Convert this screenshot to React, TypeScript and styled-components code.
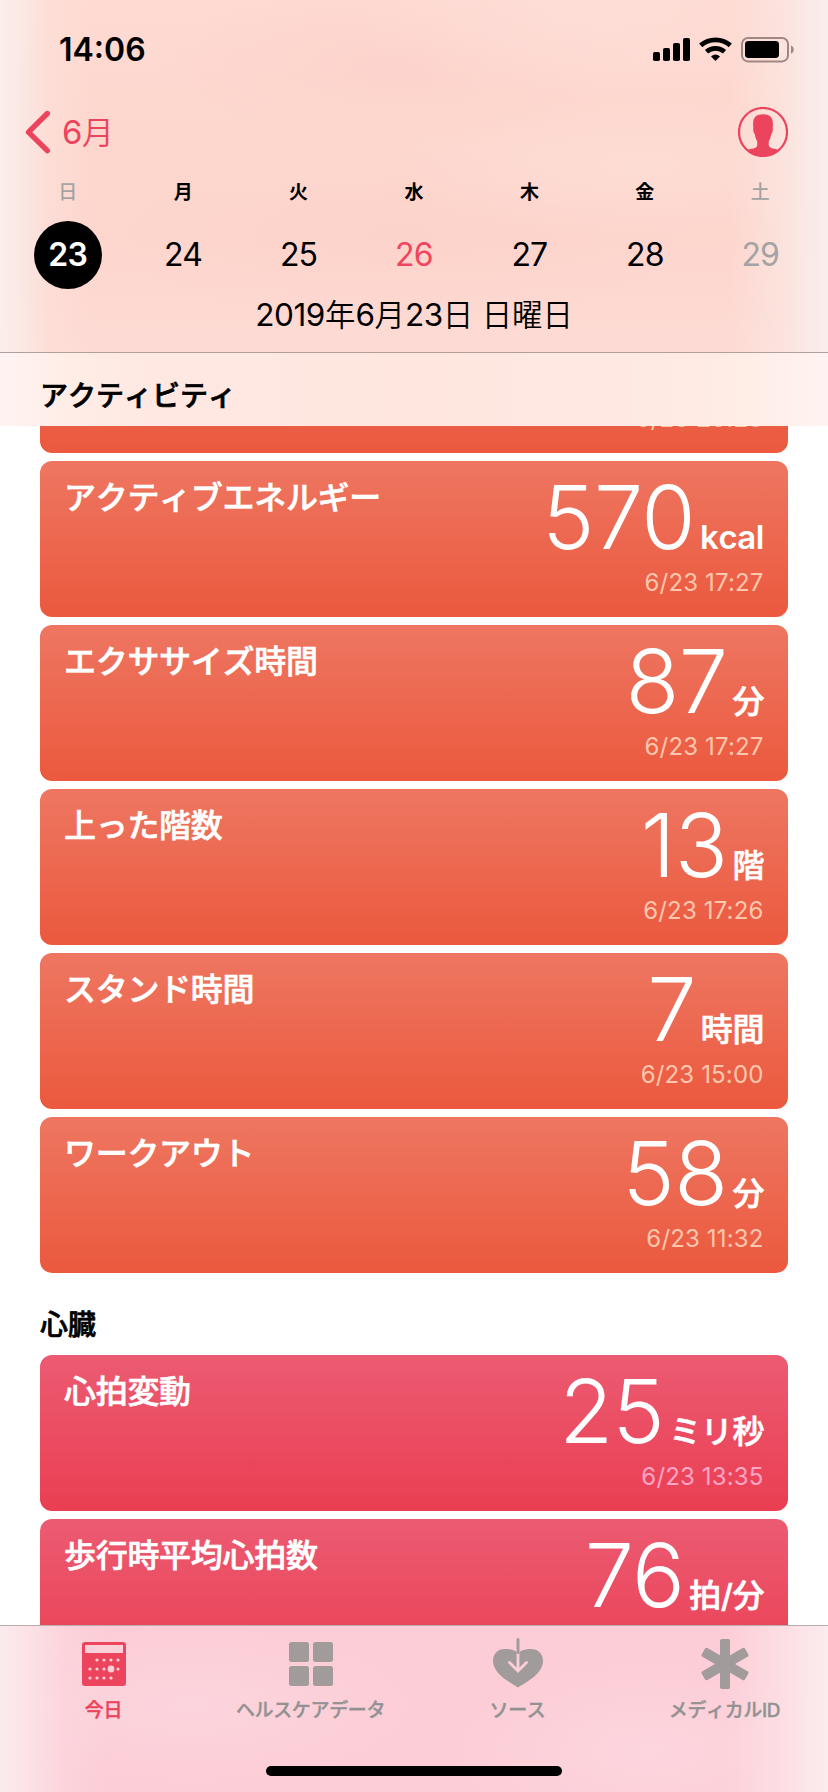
import React from "react";
import styled, { createGlobalStyle, css } from "styled-components";

const GlobalStyle = createGlobalStyle`
  * { box-sizing: border-box; }
  html, body { margin: 0; padding: 0; background: #fff; }
  body { font-family: Inter, "Noto Sans CJK JP", sans-serif; }
`;

const Screen = styled.div`
  width: 828px;
  height: 1792px;
  display: flex;
  flex-direction: column;
  overflow: hidden;
  background: #fff;
  color: #000;
`;

const Header = styled.header`
  flex: none;
  height: 353px;
  border-bottom: 1px solid #b3a09d;
  background:
    linear-gradient(90deg, #faeeeb 0, rgba(251, 234, 230, 0.95) 18px, rgba(253, 224, 217, 0.7) 48px, rgba(254, 217, 209, 0) 90px, rgba(253, 218, 211, 0) 730px, rgba(251, 229, 224, 0.8) 782px, #faeeec 828px),
    radial-gradient(260px 90px at 600px 10px, rgba(253, 222, 215, 0.9), rgba(253, 222, 215, 0)),
    radial-gradient(240px 80px at 400px 65px, rgba(252, 209, 202, 0.7), rgba(252, 209, 202, 0)),
    radial-gradient(260px 70px at 640px 165px, rgba(253, 221, 213, 0.9), rgba(253, 221, 213, 0)),
    radial-gradient(330px 90px at 400px 235px, rgba(252, 210, 202, 0.7), rgba(252, 210, 202, 0)),
    linear-gradient(#fedad2 0, #fdd7ce 140px, #fdd6ce 240px, #fddbd4 352px);
`;

const StatusBar = styled.div`
  height: 100px;
  display: flex;
  justify-content: space-between;
  padding: 30px 32px 0 59px;
`;

const Clock = styled.span`
  font-size: 32px;
  line-height: 40px;
  font-weight: 600;
`;

const StatusIcons = styled.svg`
  width: 144px;
  height: 28px;
  margin-top: 5px;
`;

const NavBar = styled.div`
  height: 79px;
  display: flex;
  justify-content: space-between;
  padding: 7px 40px 0 25px;
`;

const BackLink = styled.div`
  display: flex;
  align-items: flex-start;
  gap: 11px;
  padding-top: 4px;
  height: 50px;
  color: #ec445c;
  font-size: 33px;
  line-height: 42px;
  letter-spacing: -0.6px;
  svg { width: 26px; height: 44px; margin-top: -1px; }
`;

const Kanji = styled.span<{ $size: number }>`
  font-size: ${(p) => p.$size}px;
  font-weight: 350;
  letter-spacing: 0;
`;

const Avatar = styled.svg`
  width: 50px;
  height: 50px;
`;

const Week = styled.div`
  display: grid;
  grid-template-columns: repeat(7, 1fr);
  padding: 0 10px;
`;

type Tone = "normal" | "muted" | "today" | "selected";

const Day = styled.div`
  display: flex;
  flex-direction: column;
  align-items: center;
`;

const Weekday = styled.span<{ $muted: boolean }>`
  height: 42px;
  font-size: 19px;
  line-height: 28px;
  font-weight: ${(p) => (p.$muted ? 500 : 600)};
  color: ${(p) => (p.$muted ? "#a3a3a3" : "#000")};
`;

const DayNumber = styled.span<{ $tone: Tone }>`
  width: 68px;
  height: 68px;
  border-radius: 50%;
  text-align: center;
  font-size: 32px;
  line-height: 68px;
  letter-spacing: -0.8px;
  ${(p) => p.$tone === "muted" && css`color: #a3a3a3;`}
  ${(p) => p.$tone === "today" && css`color: #f0455e;`}
  ${(p) => p.$tone === "selected" && css`background: #000; color: #fff; font-weight: 600;`}
`;

const FullDate = styled.div`
  text-align: center;
  font-size: 31.5px;
  line-height: 40px;
  letter-spacing: -0.4px;
  margin-top: 6px;
`;

const Content = styled.main`
  flex: 1;
  min-height: 0;
  overflow: hidden;
`;

const SectionTitle = styled.h2`
  margin: 0;
  height: 82px;
  padding: 32px 40px 0;
  font-size: 28px;
  line-height: 40px;
  font-weight: 500;
  -webkit-text-stroke: 0.7px currentColor;
  font-kerning: none;
`;

const StickyTitle = styled(SectionTitle)`
  position: relative;
  z-index: 1;
  height: 73px;
  padding-top: 23px;
  background: linear-gradient(90deg, #fff3f1 0, #ffede6 75px, #ffe8e2 150px, #ffe7e0 414px, #ffe8e2 620px, #ffece5 730px, #fff3f1 828px);
`;

const CardList = styled.div<{ $scrolled?: boolean }>`
  display: flex;
  flex-direction: column;
  gap: 8px;
  padding: 0 40px;
  margin-top: ${(p) => (p.$scrolled ? "-129px" : "0")};
`;

const Card = styled.article<{ $kind: "activity" | "heart" }>`
  flex: none;
  height: 156px;
  border-radius: 12px;
  display: flex;
  justify-content: space-between;
  padding: 16px 25px 0 24px;
  color: #fff;
  background: ${(p) =>
    p.$kind === "activity"
      ? "linear-gradient(#ee7661, #eb593e)"
      : "linear-gradient(#ec5b72, #ea3e52)"};
`;

const CardName = styled.h3`
  margin: 1px 0 0;
  font-size: 32px;
  line-height: 40px;
  font-weight: 500;
  -webkit-text-stroke: 0.6px currentColor;
  font-kerning: none;
  letter-spacing: -0.3px;
`;

const Reading = styled.div`
  display: flex;
  flex-direction: column;
  align-items: flex-end;
  margin-left: auto;
`;

const Measure = styled.div`
  display: flex;
  align-items: baseline;
  height: 90px;
  line-height: 80px;
`;

const Amount = styled.span`
  font-size: 88px;
  font-weight: 300;
  letter-spacing: -0.6px;
`;

const Unit = styled.span<{ $latin: boolean }>`
  font-size: ${(p) => (p.$latin ? 33 : 32)}px;
  font-weight: ${(p) => (p.$latin ? 600 : 500)};
  -webkit-text-stroke: ${(p) => (p.$latin ? 0 : 0.6)}px currentColor;
  letter-spacing: -0.4px;
  font-kerning: none;
  margin-left: 5px;
  margin-right: -1px;
`;

const Stamp = styled.time<{ $kind: "activity" | "heart" }>`
  font-size: 24px;
  line-height: 32px;
  letter-spacing: 0.15px;
  margin-right: -0.5px;
  color: ${(p) => (p.$kind === "activity" ? "#fdc7ae" : "#ffa5c6")};
`;

const TabBar = styled.nav`
  position: relative;
  flex: none;
  height: 167px;
  border-top: 1px solid rgba(60, 20, 25, 0.35);
  background:
    linear-gradient(90deg, #fbebed 0, rgba(252, 230, 233, 0.9) 24px, rgba(252, 216, 223, 0.5) 66px, rgba(252, 208, 217, 0) 105px, rgba(252, 211, 220, 0) 725px, rgba(252, 226, 230, 0.8) 782px, #fbecee 828px),
    radial-gradient(230px 80px at 190px 80px, rgba(252, 213, 221, 0.9), rgba(252, 213, 221, 0)),
    radial-gradient(200px 90px at 650px 125px, rgba(253, 214, 222, 0.9), rgba(253, 214, 222, 0)),
    #fccdd7;
  background-clip: padding-box;
  display: grid;
  grid-template-columns: repeat(4, 1fr);
`;

const Tab = styled.div<{ $active?: boolean }>`
  display: flex;
  flex-direction: column;
  align-items: center;
  padding-top: 11px;
  height: 110px;
  font-size: 19px;
  line-height: 28px;
  font-weight: 500;
  -webkit-text-stroke: 0.35px currentColor;
  font-kerning: none;
  letter-spacing: -0.35px;
  color: ${(p) => (p.$active ? "#ec445c" : "#929292")};
  svg { width: 54px; height: 54px; margin-bottom: 6px; color: ${(p) => (p.$active ? "#ec445c" : "#a19b9c")}; }
`;

const HomeIndicator = styled.div`
  position: absolute;
  left: 266px;
  bottom: 16px;
  width: 296px;
  height: 10px;
  border-radius: 5px;
  background: #000;
`;

const days: { label: string; n: number; tone: Tone }[] = [
  { label: "日", n: 23, tone: "selected" },
  { label: "月", n: 24, tone: "normal" },
  { label: "火", n: 25, tone: "normal" },
  { label: "水", n: 26, tone: "today" },
  { label: "木", n: 27, tone: "normal" },
  { label: "金", n: 28, tone: "normal" },
  { label: "土", n: 29, tone: "muted" },
];

type Entry = { name?: string; value?: string; unit?: string; time?: string };

const activity: Entry[] = [
  { time: "6/23 20:20" },
  { name: "アクティブエネルギー", value: "570", unit: "kcal", time: "6/23 17:27" },
  { name: "エクササイズ時間", value: "87", unit: "分", time: "6/23 17:27" },
  { name: "上った階数", value: "13", unit: "階", time: "6/23 17:26" },
  { name: "スタンド時間", value: "7", unit: "時間", time: "6/23 15:00" },
  { name: "ワークアウト", value: "58", unit: "分", time: "6/23 11:32" },
];

const heart: Entry[] = [
  { name: "心拍変動", value: "25", unit: "ミリ秒", time: "6/23 13:35" },
  { name: "歩行時平均心拍数", value: "76", unit: "拍/分" },
];

function MetricCard({ entry, kind }: { entry: Entry; kind: "activity" | "heart" }) {
  return (
    <Card $kind={kind}>
      {entry.name && <CardName>{entry.name}</CardName>}
      <Reading>
        <Measure>
          {entry.value && <Amount>{entry.value}</Amount>}
          {entry.unit && <Unit $latin={entry.unit === "kcal"}>{entry.unit}</Unit>}
        </Measure>
        {entry.time && <Stamp $kind={kind}>{entry.time}</Stamp>}
      </Reading>
    </Card>
  );
}

/* Sets the kanji of a date lighter than its digits. */
function DateText({ text, size }: { text: string; size: number }) {
  return (
    <span>
      {text.split(/([年月日曜]+)/).map((part, i) =>
        i % 2 ? <Kanji key={i} $size={size}>{part}</Kanji> : part
      )}
    </span>
  );
}

function Status() {
  return (
    <StatusIcons viewBox="0 0 144 28">
      <rect x="1" y="17" width="7" height="9" rx="1.8" />
      <rect x="11" y="13" width="7" height="13" rx="1.8" />
      <rect x="21" y="8" width="7" height="18" rx="1.8" />
      <rect x="31" y="3" width="7" height="23" rx="1.8" />
      <path d="M48.7 10.4a22.5 22.5 0 0 1 29.6 0" fill="none" stroke="#000" strokeWidth="4.8" />
      <path d="M54.5 16.8a13.8 13.8 0 0 1 18 0" fill="none" stroke="#000" strokeWidth="4.8" />
      <path d="M59 21.4a7.2 7.2 0 0 1 9 0l-4.5 4.6z" />
      <rect x="90" y="3" width="46" height="23.4" rx="6" fill="none" stroke="#9f8884" strokeWidth="2" />
      <rect x="93" y="6" width="34" height="17" rx="3.4" />
      <path d="M139 10.5c3.6 1.2 3.6 7 0 8.2z" fill="#9f8884" />
    </StatusIcons>
  );
}

function CalendarIcon() {
  const dots: [number, number][] = [
    [20, 23], [27, 23], [34, 23], [41, 23],
    [13, 32], [20, 32], [27, 32], [41, 32],
    [13, 41], [20, 41], [27, 41], [34, 41],
  ];
  return (
    <svg viewBox="0 0 54 54">
      <rect x="5" y="5" width="44" height="44" rx="3" fill="currentColor" />
      <rect x="8" y="8" width="38" height="8" fill="#fbd0d8" />
      {dots.map(([x, y]) => <circle key={`${x}-${y}`} cx={x} cy={y} r="1.6" fill="#fbd0d8" />)}
      <circle cx="34" cy="32" r="3.4" fill="#fbd0d8" />
    </svg>
  );
}

function GridIcon() {
  return (
    <svg viewBox="0 0 54 54" fill="currentColor">
      <rect x="5" y="5" width="20" height="20" rx="2.5" />
      <rect x="29" y="5" width="20" height="20" rx="2.5" />
      <rect x="5" y="29" width="20" height="20" rx="2.5" />
      <rect x="29" y="29" width="20" height="20" rx="2.5" />
    </svg>
  );
}

function SourceIcon() {
  return (
    <svg viewBox="0 0 54 54">
      <path d="M27 50.500C20 46 2 37 2 24c0-7.500 5-12 12-12 5.500 0 10 1 13 4.500 3-3.500 7.500-4.500 13-4.500 7 0 12 4.500 12 12 0 13-18 22-25 26.500z" fill="currentColor" />
      <path d="M27 14v19M18.500 25.500l8.500 8.500 8.500-8.500" fill="none" stroke="#fccfd9" strokeWidth="2.8" strokeLinecap="round" />
      <path d="M27 2.500V15.500" fill="none" stroke="currentColor" strokeWidth="3" strokeLinecap="round" />
    </svg>
  );
}

function MedicalIcon() {
  return (
    <svg viewBox="0 0 54 54" fill="currentColor">
      {[0, 60, 120].map((a) => (
        <rect key={a} x="22" y="2" width="10" height="50" rx="1.8" transform={`rotate(${a} 27 27)`} />
      ))}
    </svg>
  );
}

export default function App() {
  return (
    <Screen lang="ja">
      <GlobalStyle />
      <Header>
        <StatusBar>
          <Clock>14:06</Clock>
          <Status />
        </StatusBar>
        <NavBar>
          <BackLink>
            <svg viewBox="0 0 26 44">
              <path d="M22.3 3.5L3.5 22.2L22.3 40.7" fill="none" stroke="currentColor" strokeWidth="5.4" strokeLinecap="round" strokeLinejoin="round" />
            </svg>
            <DateText text="6月" size={32} />
          </BackLink>
          <Avatar viewBox="0 0 50 50">
            <circle cx="25" cy="25" r="24" fill="none" stroke="#ec445c" strokeWidth="2.2" />
            <path d="M9.500 43c3.500-1.600 9-1.200 9.600-4.200.3-1.500.2-3 0-4.800-1.500-2.500-2-4.500-2.300-7-1.500-.8-1.800-4.500-1.500-6-.8-8 .2-13.800 9.700-13.800s10.500 5.800 9.700 13.800c.3 1.500 0 5.200-1.500 6-.3 2.500-.8 4.500-2.300 7-.2 1.800-.3 3.300 0 4.800.6 3 6.100 2.600 9.600 4.200-3.500 4-9 6.500-15.500 6.500s-12-2.500-15.500-6.500z" fill="#ec445c" />
          </Avatar>
        </NavBar>
        <Week>
          {days.map((d) => (
            <Day key={d.n}>
              <Weekday $muted={d.label === "日" || d.label === "土"}>{d.label}</Weekday>
              <DayNumber $tone={d.tone}>{d.n}</DayNumber>
            </Day>
          ))}
        </Week>
        <FullDate><DateText text="2019年6月23日 日曜日" size={30.4} /></FullDate>
      </Header>
      <Content>
        <StickyTitle>アクティビティ</StickyTitle>
        <CardList $scrolled>
          {activity.map((e, i) => <MetricCard key={i} entry={e} kind="activity" />)}
        </CardList>
        <SectionTitle>心臓</SectionTitle>
        <CardList>
          {heart.map((e, i) => <MetricCard key={i} entry={e} kind="heart" />)}
        </CardList>
      </Content>
      <TabBar>
        <Tab $active><CalendarIcon />今日</Tab>
        <Tab><GridIcon />ヘルスケアデータ</Tab>
        <Tab><SourceIcon />ソース</Tab>
        <Tab><MedicalIcon />メディカルID</Tab>
        <HomeIndicator />
      </TabBar>
    </Screen>
  );
}
